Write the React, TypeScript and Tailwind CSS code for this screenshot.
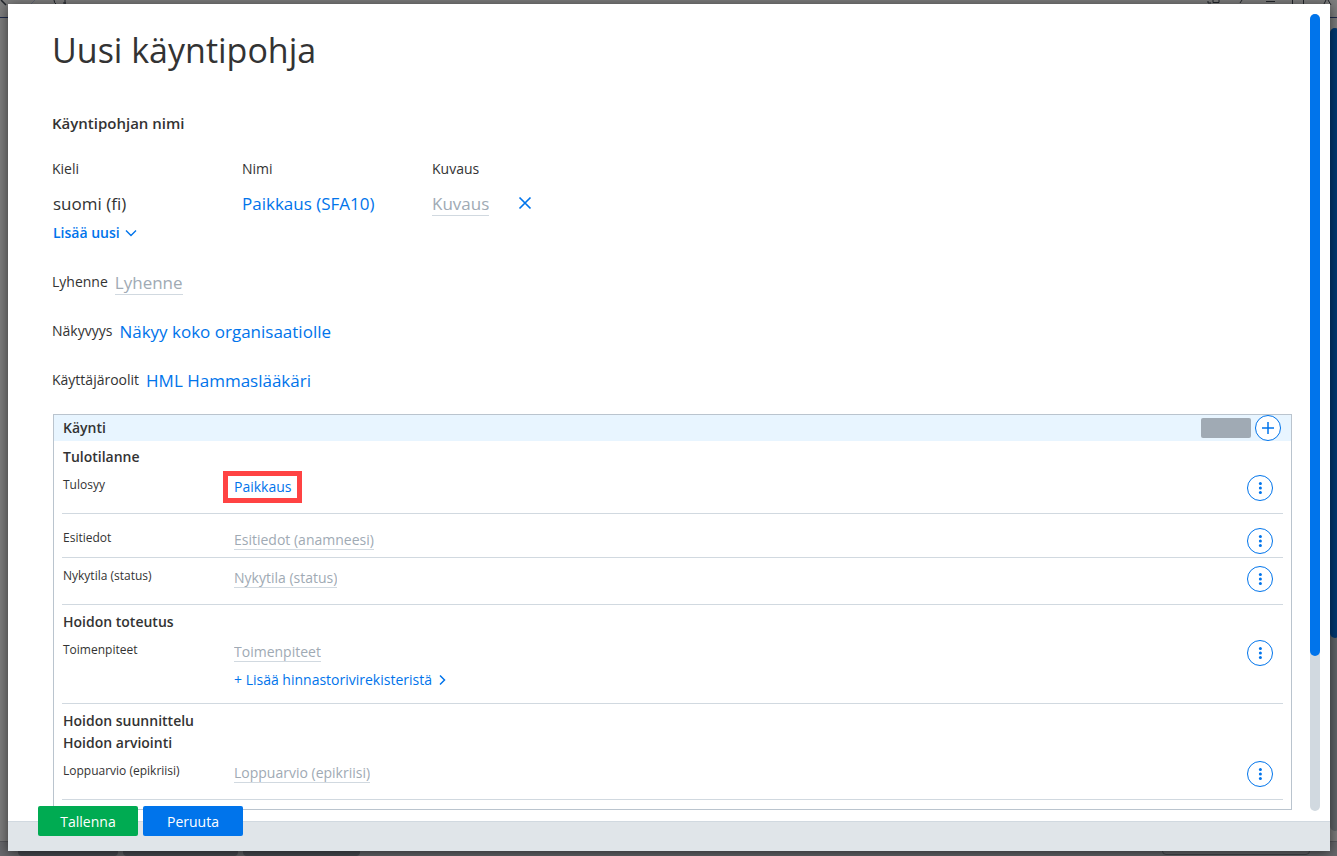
import type { ReactNode } from "react";

function MoreButton({ label }: { label: string }) {
  return (
    <button
      type="button"
      aria-label={label}
      className="mr-[10px] flex size-[26px] shrink-0 items-center justify-center rounded-full border border-[#0074eb] bg-white text-[#0074eb]"
    >
      <svg width="4" height="14" viewBox="0 0 4 14" fill="currentColor">
        <circle cx="2.4" cy="2.5" r="1.5" />
        <circle cx="2.4" cy="7" r="1.5" />
        <circle cx="2.4" cy="11.5" r="1.5" />
      </svg>
    </button>
  );
}

// Text box that is as wide as its placeholder
function InlineInput({ id, placeholder, large }: { id: string; placeholder: string; large?: boolean }) {
  return (
    <input
      id={id}
      aria-label={placeholder}
      placeholder={placeholder}
      className={
        large
          ? "block field-sizing-content h-6 border-b border-[#d1d9e0] text-[17px] leading-6 outline-none placeholder:text-[#a0aab4]"
          : "block field-sizing-content h-5 border-b border-[#d1d9e0] text-sm leading-5 outline-none placeholder:text-[#a0aab4]"
      }
    />
  );
}

function SectionTitle({ children }: { children: ReactNode }) {
  return <h3 className="pl-px text-sm leading-[22px] font-semibold">{children}</h3>;
}

type RowProps = { id: string; label: string; className: string; children: ReactNode };

function VisitRow({ id, label, className, children }: RowProps) {
  return (
    <div className={`flex items-start border-b border-[#d1d9e0] ${className}`}>
      <label htmlFor={id} className="w-[172px] shrink-0 pl-px text-xs leading-5">
        {label}
      </label>
      <div className="flex-1 pt-0.5">{children}</div>
      <MoreButton label={`${label} valikko`} />
    </div>
  );
}

// Dimmed page that stays visible around the dialog
function PageBehind() {
  return (
    <div className="absolute inset-0 flex flex-col overflow-hidden bg-[#7f7f7f]" aria-hidden="true">
      <div className="flex h-[18px] shrink-0 items-start justify-between border-b border-[#1f2b4d]">
        <svg width="80" height="6" viewBox="0 0 80 6" fill="none" stroke="#22262c">
          <path d="M1 0 L6 5" strokeWidth="1.5" />
          <path d="M31 4 L35 0" stroke="#666b78" />
          <path d="M54 0 Q54 3 57 5 M63 3 L66 3 M65 0 V4" />
        </svg>
        <svg width="137" height="6" viewBox="0 0 137 6" fill="none" stroke="#22262c">
          <path d="M8 1 V3 H11 M13 0 V2.5 H19 V0 M42 0 L40 3 M66 1.5 H75 M92.5 0 V5 M103.5 0 V5" />
          <path d="M128 0 L131 5 M126 0 L124 4" />
        </svg>
      </div>
      <div className="flex flex-1 justify-end pt-[10px] pb-[10px]">
        <div className="w-[10px] translate-x-[3px] rounded-full bg-[#62676b]">
          <div className="h-[76%] rounded-full bg-[#003a75]" />
        </div>
      </div>
      <div className="flex h-[15px] shrink-0 items-end gap-[5px] border-t border-[#58595e] bg-[#68696d] pl-[18px]">
        <div className="h-3 w-[100px] rounded-b-sm bg-[#4b4d54]" />
        <div className="h-3 w-[115px] rounded-b-sm bg-[#4b4d54]" />
        <div className="h-3 w-[117px] rounded-b-sm bg-[#4b4d54]" />
        <div className="mr-[27px] mb-px ml-auto h-3 w-[148px] rounded-sm border border-[#45464c]" />
      </div>
    </div>
  );
}

export default function App() {
  return (
    <div className="relative flex min-h-screen pt-1 pr-[7px] pb-[5px] pl-2 font-['Open_Sans','Noto_Sans',sans-serif] text-[#333]">
      <PageBehind />

      <main
        role="dialog"
        aria-labelledby="dialog-title"
        className="relative flex flex-1 flex-col bg-white shadow-[0_2px_12px_rgba(0,0,0,0.6)]"
      >
        <div className="flex flex-1">
          <div className="min-w-0 flex-1 pt-[22px] pr-[18px] pb-[10px] pl-11">
            <h1 id="dialog-title" className="text-[34px] leading-[48px] font-normal">
              Uusi käyntipohja
            </h1>

            <h2 className="mt-[39px] text-[15px] leading-5 font-semibold">Käyntipohjan nimi</h2>

            <table className="mt-[23px] table-fixed text-left">
              <colgroup>
                <col className="w-[190px]" />
                <col className="w-[190px]" />
                <col className="w-[86px]" />
                <col className="w-4" />
              </colgroup>
              <thead>
                <tr className="h-[26px] text-sm leading-5">
                  <th className="font-normal">Kieli</th>
                  <th className="font-normal">Nimi</th>
                  <th className="font-normal">Kuvaus</th>
                  <td></td>
                </tr>
              </thead>
              <tbody>
                <tr className="h-11 text-[17px] leading-6">
                  <td className="pl-px">suomi (fi)</td>
                  <td>
                    <button type="button" className="block text-[#0074eb]">
                      Paikkaus (SFA10)
                    </button>
                  </td>
                  <td>
                    <InlineInput id="kuvaus" placeholder="Kuvaus" large />
                  </td>
                  <td>
                    <button type="button" aria-label="Poista" className="block pb-0.5 text-[#0074eb]">
                      <svg width="14" height="14" viewBox="0 0 14 14" stroke="currentColor" strokeWidth="1.7">
                        <path d="M1.5 1.5 L12.5 12.5 M12.5 1.5 L1.5 12.5" />
                      </svg>
                    </button>
                  </td>
                </tr>
              </tbody>
            </table>

            <button
              type="button"
              className="-mt-[3px] flex items-center gap-[5px] pl-px text-sm leading-5 font-semibold text-[#0074eb]"
            >
              Lisää uusi
              <svg width="12" height="8" viewBox="0 0 12 8" fill="none" stroke="currentColor" strokeWidth="1.4">
                <path d="M1 1.5 L6 6.5 L11 1.5" />
              </svg>
            </button>

            <div className="mt-7 flex flex-col gap-[25px]">
              <div className="flex h-6 items-start gap-[7px]">
                <label htmlFor="lyhenne" className="text-sm leading-[22px]">
                  Lyhenne
                </label>
                <InlineInput id="lyhenne" placeholder="Lyhenne" large />
              </div>
              <div className="flex h-6 items-start gap-[7px]">
                <label htmlFor="nakyvyys" className="text-sm leading-[22px]">
                  Näkyvyys
                </label>
                <button id="nakyvyys" type="button" className="text-[17px] leading-6 text-[#0074eb]">
                  Näkyy koko organisaatiolle
                </button>
              </div>
              <div className="flex h-6 items-start gap-[7px]">
                <label htmlFor="roolit" className="text-sm leading-[22px]">
                  Käyttäjäroolit
                </label>
                <button id="roolit" type="button" className="text-[17px] leading-6 text-[#0074eb]">
                  HML Hammaslääkäri
                </button>
              </div>
            </div>

            <section className="mt-[21px] ml-px border border-[#bac4ce] pb-[9px]">
              <header className="flex h-[26px] items-center gap-1 bg-[#e8f5ff] pr-[10px] pl-[9px]">
                <h2 className="flex-1 text-sm leading-5 font-semibold">Käynti</h2>
                <div className="h-5 w-[50px] rounded-xs bg-[#a0aab4]" />
                <button
                  type="button"
                  aria-label="Lisää"
                  className="flex size-[26px] items-center justify-center rounded-full border border-[#0074eb] bg-white text-[#0074eb]"
                >
                  <svg width="14" height="14" viewBox="0 0 14 14" stroke="currentColor" strokeWidth="1.5">
                    <path d="M7 1 V13 M1 7 H13" />
                  </svg>
                </button>
              </header>

              <div className="px-2 pt-[5px]">
                <SectionTitle>Tulotilanne</SectionTitle>
                <VisitRow id="tulosyy" label="Tulosyy" className="mt-[7px] h-[39px]">
                  <div className="relative w-fit">
                    <button id="tulosyy" type="button" className="block text-sm leading-5 text-[#0074eb]">
                      Paikkaus
                    </button>
                    <div className="pointer-events-none absolute -inset-x-[11px] -inset-y-[6px] border-5 border-[#ff4343]" />
                  </div>
                </VisitRow>
                <VisitRow id="esitiedot" label="Esitiedot" className="mt-[14px] h-[30px]">
                  <InlineInput id="esitiedot" placeholder="Esitiedot (anamneesi)" />
                </VisitRow>
                <VisitRow id="nykytila" label="Nykytila (status)" className="mt-2 h-[39px]">
                  <InlineInput id="nykytila" placeholder="Nykytila (status)" />
                </VisitRow>
              </div>

              <div className="px-2 pt-[6px]">
                <SectionTitle>Hoidon toteutus</SectionTitle>
                <VisitRow id="toimenpiteet" label="Toimenpiteet" className="mt-[7px] h-16">
                  <InlineInput id="toimenpiteet" placeholder="Toimenpiteet" />
                  <button
                    type="button"
                    className="mt-2 flex items-center gap-[7px] text-sm leading-5 text-[#0074eb]"
                  >
                    + Lisää hinnastorivirekisteristä
                    <svg width="7" height="12" viewBox="0 0 7 12" fill="none" stroke="currentColor" strokeWidth="1.5">
                      <path d="M1 1.5 L5.5 6 L1 10.5" />
                    </svg>
                  </button>
                </VisitRow>
              </div>

              <div className="px-2 pt-[6px]">
                <SectionTitle>Hoidon suunnittelu</SectionTitle>
                <SectionTitle>Hoidon arviointi</SectionTitle>
                <VisitRow id="loppuarvio" label="Loppuarvio (epikriisi)" className="mt-[7px] h-[39px]">
                  <InlineInput id="loppuarvio" placeholder="Loppuarvio (epikriisi)" />
                </VisitRow>
              </div>
            </section>
          </div>

          {/* Scroll bar, the thumb takes 29 parts of 36 */}
          <div className="my-[10px] mr-[10px] w-[10px] rounded-full bg-[#d1d9e0]">
            <div className="h-29/36 rounded-full bg-[#0074eb]" />
          </div>
        </div>

        <footer className="h-[30px] border-t border-[#d1d9e0] bg-[#e0e5e9] pl-[30px]">
          <div className="-mt-4 flex gap-[5px] text-sm text-white">
            <button type="button" className="h-[30px] w-[100px] rounded-xs bg-[#00ab52] pt-0.5">
              Tallenna
            </button>
            <button type="button" className="h-[30px] w-[100px] rounded-xs bg-[#0074eb] pt-0.5">
              Peruuta
            </button>
          </div>
        </footer>
      </main>
    </div>
  );
}
